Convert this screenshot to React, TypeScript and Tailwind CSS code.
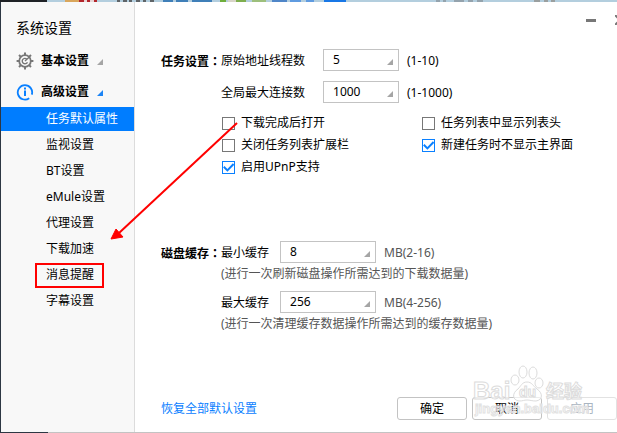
import type { ReactNode } from "react";

const MENU = [
  "任务默认属性",
  "监视设置",
  "BT设置",
  "eMule设置",
  "代理设置",
  "下载加速",
  "消息提醒",
  "字幕设置",
];

const ACTIVE = "任务默认属性";
const MARKED = "消息提醒";

// Slivers of the window behind, visible above the dialog: x, width, colour.
const BACKDROP: [number, number, string][] = [
  [0, 47, "#1f2226"],
  [65, 14, "#d9a65c"],
  [79, 18, "#b3262b"],
  [84, 3, "#e8d5d5"],
  [90, 4, "#e8d5d5"],
  [117, 3, "#5f6468"],
  [123, 4, "#5f6468"],
  [129, 3, "#5f6468"],
  [136, 4, "#5f6468"],
  [143, 3, "#5f6468"],
  [150, 4, "#5f6468"],
  [163, 10, "#3f7fb8"],
  [176, 12, "#3f7fb8"],
  [192, 20, "#3f7fb8"],
  [220, 6, "#6fae3c"],
  [228, 8, "#d8d4c8"],
  [236, 10, "#7fae4e"],
  [252, 14, "#9dbf7c"],
  [272, 15, "#4f86c8"],
  [290, 11, "#5f9be0"],
  [306, 8, "#5f9be0"],
  [324, 22, "#1877e6"],
  [436, 4, "#94a3ad"],
  [443, 3, "#94a3ad"],
  [454, 10, "#94a3ad"],
  [468, 5, "#94a3ad"],
  [477, 6, "#94a3ad"],
  [534, 6, "#9a9f9f"],
  [544, 4, "#9a9f9f"],
  [551, 4, "#9a9f9f"],
];

function Corner({ className }: { className: string }) {
  return (
    <svg viewBox="0 0 6 6" className={`h-[6px] w-[6px] ${className}`} aria-hidden="true">
      <path d="M6 0v6H0z" fill="currentColor" />
    </svg>
  );
}

function GearIcon() {
  return (
    <svg viewBox="0 0 18 18" className="h-[18px] w-[18px] text-[#777]" fill="none" stroke="currentColor" aria-hidden="true">
      <circle cx="9" cy="9" r="5.8" strokeWidth="1.8" />
      <path
        d="M9 0.6v2.6M9 14.8v2.6M0.6 9h2.6M14.8 9h2.6M3 3l1.9 1.9M13.1 13.1l1.9 1.9M3 15l1.9-1.9M13.1 4.9L15 3"
        strokeWidth="2"
      />
      <path d="M11.4 10.2a2.7 2.7 0 1 1-.6-3.1M9 9l4.4-4" strokeWidth="1.4" />
    </svg>
  );
}

function InfoIcon() {
  return (
    <svg viewBox="0 0 18 18" className="h-[18px] w-[18px] text-[#0a80ff]" fill="none" stroke="currentColor" aria-hidden="true">
      <path d="M13.2 15.2A7.2 7.2 0 1 1 15.8 11.6" strokeWidth="1.8" />
      <path d="M9 7.6v5.4M9 4.6v1.8" strokeWidth="2" />
    </svg>
  );
}

function SectionTitle({ children }: { children: ReactNode }) {
  return (
    <h2 className="w-[60px] shrink-0 pt-[1px] leading-[22px] font-bold whitespace-nowrap">
      {children}
      <span className="font-['Noto_Sans_CJK_TC',sans-serif]">：</span>
    </h2>
  );
}

function NumberSelect({ id, value, width }: { id: string; value: string; width: string }) {
  return (
    <div className={`relative ${width}`}>
      <select
        id={id}
        defaultValue={value}
        className="block h-[22px] w-full appearance-none border border-[#c3c3c3] bg-white pl-[9px] leading-[20px] text-black"
      >
        <option value={value}>{value}</option>
      </select>
      <Corner className="pointer-events-none absolute right-[6px] bottom-[6px] text-[#a5a5a5]" />
    </div>
  );
}

function Check({ label, checked = false }: { label: string; checked?: boolean }) {
  return (
    <label className="flex h-[22px] items-center gap-[6px]">
      <span className="relative block h-[13px] w-[13px]">
        <input
          type="checkbox"
          defaultChecked={checked}
          className="peer block h-[13px] w-[13px] appearance-none border border-[#777] bg-white checked:border-[#0a80ff]"
        />
        <svg
          viewBox="0 0 13 13"
          className="pointer-events-none absolute inset-0 hidden h-[13px] w-[13px] text-[#0a80ff] peer-checked:block"
          fill="none"
          stroke="currentColor"
          strokeWidth="2"
          aria-hidden="true"
        >
          <path d="M1.8 5.8l3.6 3.6L11.6 3" />
        </svg>
      </span>
      {label}
    </label>
  );
}

function Field({ id, label, value, width, unit, gap }: {
  id: string;
  label: string;
  value: string;
  width: string;
  unit: ReactNode;
  gap: string;
}) {
  return (
    <div className="flex h-[22px] items-center">
      <label htmlFor={id} className={`pt-[2px] ${gap}`}>{label}</label>
      <NumberSelect id={id} value={value} width={width} />
      <span className="ml-[8px] pt-[2px]">{unit}</span>
    </div>
  );
}

function Watermark() {
  return (
    <svg
      viewBox="0 0 120 56"
      className="pointer-events-none absolute right-[25px] bottom-[11px] h-[56px] w-[120px]"
      fill="#fff"
      fillOpacity="0.7"
      stroke="#dcdcdc"
      strokeWidth="1"
      fontFamily="Liberation Sans, Noto Sans CJK SC, sans-serif"
      fontWeight="700"
      aria-hidden="true"
    >
      <text x="1" y="34" fontSize="24">Bai</text>
      <ellipse cx="43" cy="15" rx="4" ry="5" />
      <ellipse cx="51" cy="7" rx="4" ry="6" />
      <ellipse cx="61" cy="8" rx="4" ry="6" />
      <ellipse cx="67" cy="18" rx="4" ry="5" />
      <path d="M55 17c-5 0-6 4-9 7-6 4-6 11 1 12 4 0 5-1 8-1s5 1 9 1c7-1 7-8 1-12-4-3-5-7-10-7z" />
      <text x="47" y="32" fontSize="14">du</text>
      <text x="74" y="33" fontSize="18">经验</text>
      <text x="3" y="48" fontSize="13" fillOpacity="0.35" stroke="#e2e2e2">jingyan.baidu.com</text>
    </svg>
  );
}

export default function App() {
  return (
    <div className="relative flex min-h-screen flex-col overflow-hidden bg-white font-['Noto_Sans','Noto_Sans_CJK_SC',sans-serif] text-[12px] leading-[18px] text-black">
      <svg className="h-[2px] w-full bg-[#b3cede]" aria-hidden="true">
        {BACKDROP.map(([x, w, fill]) => (
          <rect key={x} x={x} width={w} height="2" fill={fill} />
        ))}
      </svg>

      <div className="flex flex-1 border-l border-[#2d3743]">
        <aside className="w-[134px] shrink-0 border-r border-[#dcdcdc] bg-[#f8f8f8]">
          <h1 className="mt-[16px] ml-[15px] text-[14px] leading-[20px]">系统设置</h1>
          <nav>
            <button type="button" className="mt-[7px] flex h-[31px] w-full items-center pl-[15px] font-bold">
              <GearIcon />
              <span className="ml-[7px]">基本设置</span>
              <Corner className="ml-[8px] mt-[3px] text-[#a5a5a5]" />
            </button>
            <button type="button" className="flex h-[31px] w-full items-center pl-[15px] font-bold">
              <InfoIcon />
              <span className="ml-[7px]">高级设置</span>
              <Corner className="ml-[8px] mt-[3px] text-[#1c84f5]" />
            </button>
            <ul className="flex flex-col gap-[2px]">
              {MENU.map((item) => (
                <li key={item} className="relative">
                  <a
                    href="#"
                    className={`block h-[24px] pl-[45px] leading-[24px] ${item === ACTIVE ? "bg-[#007dff] text-white" : ""}`}
                  >
                    {item}
                  </a>
                  {item === MARKED && (
                    <span className="pointer-events-none absolute top-0 left-[34px] h-[25px] w-[69px] border-2 border-[#f00]" />
                  )}
                </li>
              ))}
            </ul>
          </nav>
        </aside>

        <main className="relative flex min-w-0 flex-1 flex-col">
          <div className="absolute top-[13px] right-0 flex items-center gap-[19px] overflow-hidden text-[#777]">
            <button type="button" aria-label="最小化" className="h-[3px] w-[10px] bg-[#777]" />
            <button type="button" aria-label="关闭" className="h-[10px] w-[2px] overflow-hidden">
              <svg viewBox="0 0 10 10" className="h-[10px] w-[10px] max-w-none" stroke="currentColor" strokeWidth="2" aria-hidden="true">
                <path d="M0 0l10 10M10 0L0 10" />
              </svg>
            </button>
          </div>

          <section className="mt-[47px] flex pl-[26px]">
            <SectionTitle>任务设置</SectionTitle>
            <div className="flex-1">
              <Field id="threads" label="原始地址线程数" value="5" width="w-[76px]" unit="(1-10)" gap="mr-[18px]" />
              <div className="mt-[10px]">
                <Field id="connections" label="全局最大连接数" value="1000" width="w-[76px]" unit="(1-1000)" gap="mr-[18px]" />
              </div>
              <div className="mt-[9px] grid grid-cols-[200px_1fr] pl-[1px]">
                <Check label="下载完成后打开" />
                <Check label="任务列表中显示列表头" />
                <Check label="关闭任务列表扩展栏" />
                <Check label="新建任务时不显示主界面" checked />
                <Check label="启用UPnP支持" checked />
              </div>
            </div>
          </section>

          <section className="mt-[63px] flex pl-[26px]">
            <SectionTitle>磁盘缓存</SectionTitle>
            <div className="flex-1 text-[#555]">
              <div className="text-black">
                <Field id="min-cache" label="最小缓存" value="8" width="w-[96px]" unit={<span className="text-[#555]">MB(2-16)</span>} gap="mr-[11px]" />
              </div>
              <p className="mt-[2px]">(进行一次刷新磁盘操作所需达到的下载数据量)</p>
              <div className="mt-[8px] text-black">
                <Field id="max-cache" label="最大缓存" value="256" width="w-[96px]" unit={<span className="text-[#555]">MB(4-256)</span>} gap="mr-[11px]" />
              </div>
              <p className="mt-[2px]">(进行一次清理缓存数据操作所需达到的缓存数据量)</p>
            </div>
          </section>

          <footer className="mt-auto mb-[12px] flex items-center pl-[26px]">
            <a href="#" className="text-[#0a80ff]">恢复全部默认设置</a>
            <div className="ml-auto flex gap-[5px]">
              <button type="button" className="h-[23px] w-[70px] rounded-[3px] border border-[#c3c3c3]">确定</button>
              <button type="button" className="h-[23px] w-[70px] rounded-[3px] border border-[#c3c3c3]">取消</button>
              <button type="button" disabled className="h-[23px] w-[70px] rounded-[3px] border border-[#e2e2e2] text-[#a9b4c0]">应用</button>
            </div>
          </footer>
          <Watermark />
        </main>
      </div>

      <div className="flex h-[1px] bg-[#c3c3c3]">
        <span className="w-[48px] bg-[#2d3743]" />
      </div>

      {/* pointer from the first checkbox to the marked menu entry */}
      <svg className="pointer-events-none absolute top-[120px] left-[108px] h-[124px] w-[132px]" viewBox="0 0 132 124" aria-hidden="true">
        <path d="M129 3L11 113" stroke="#f00" strokeWidth="2" />
        <path d="M3 119l5-10 7 8z" fill="#f00" stroke="#f00" strokeWidth="1" />
      </svg>
    </div>
  );
}
